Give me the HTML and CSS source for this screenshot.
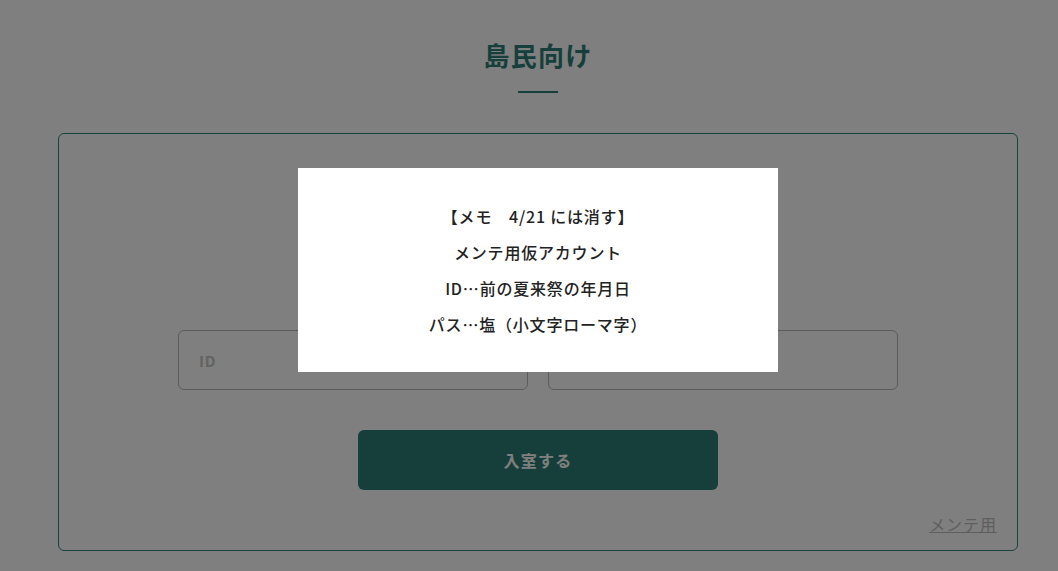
FILE: index.html
```html
<!DOCTYPE html>
<html lang="ja">
<head>
<meta charset="utf-8">
<link rel="stylesheet" href="styles.css">
</head>
<body>
<main class="page">
  <h1 class="title">島民向け</h1>
  <div class="title-bar"></div>
  <section class="card">
    <div class="fields">
      <div class="field"><span class="placeholder">ID</span></div>
      <div class="field"><span class="placeholder"></span></div>
    </div>
    <button class="enter">入室する</button>
    <div class="link-row"><a class="maint" href="#">メンテ用</a></div>
  </section>
</main>
<div class="overlay">
  <div class="modal">
    <p>【メモ　4/21 には消す】</p>
    <p>メンテ用仮アカウント</p>
    <p>ID…前の夏来祭の年月日</p>
    <p>パス…塩（小文字ローマ字）</p>
  </div>
</div>
</body>
</html>
```
FILE: styles.css
```css
* { box-sizing: border-box; }
html, body { margin: 0; padding: 0; }
body {
  width: 1058px;
  height: 571px;
  overflow: hidden;
  background: #fff;
  font-family: "Noto Sans CJK JP", "Noto Sans", sans-serif;
  color: #222;
}
.page {
  width: 960px;
  margin-left: 58px;
  padding-top: 36px;
  display: flex;
  flex-direction: column;
  align-items: center;
}
.title {
  margin: 0;
  font-size: 26px;
  line-height: 38px;
  font-weight: 700;
  letter-spacing: 0.05em;
  color: #2c7e76;
}
.title-bar {
  width: 40px;
  height: 2px;
  background: #2c7e76;
  margin-top: 17px;
  margin-bottom: 40px;
}
.card {
  width: 960px;
  height: 418px;
  border: 1px solid #2f857c;
  border-radius: 6px;
  padding: 196px 20px 0;
  display: flex;
  flex-direction: column;
  align-items: center;
}
.fields {
  display: flex;
  gap: 20px;
}
.field {
  width: 350px;
  height: 60px;
  border: 1px solid #b8b8b8;
  border-radius: 6px;
  display: flex;
  align-items: center;
  padding-left: 20px;
}
.placeholder {
  font-size: 15px;
  font-weight: 700;
  color: #c6c6c6;
  letter-spacing: 0.05em;
}
.enter {
  margin-top: 40px;
  width: 360px;
  height: 60px;
  border: none;
  border-radius: 6px;
  background: #2c7e76;
  color: #fff;
  font-family: inherit;
  font-size: 16px;
  font-weight: 700;
  letter-spacing: 0.08em;
}
.link-row {
  align-self: stretch;
  display: flex;
  justify-content: flex-end;
  margin-top: 22px;
}
.maint {
  font-size: 16px;
  line-height: 24px;
  color: #bcbcbc;
  text-decoration: underline;
  letter-spacing: 0.06em;
}
.overlay {
  position: fixed;
  inset: 0;
  background: rgba(0, 0, 0, 0.5);
}
.modal {
  position: absolute;
  left: 298px;
  top: 168px;
  width: 480px;
  height: 204px;
  background: #fff;
  padding: 30px 0;
  text-align: center;
}
.modal p {
  margin: 0;
  font-size: 16px;
  line-height: 36px;
  font-weight: 500;
  letter-spacing: 0.05em;
  color: #222;
}
```
